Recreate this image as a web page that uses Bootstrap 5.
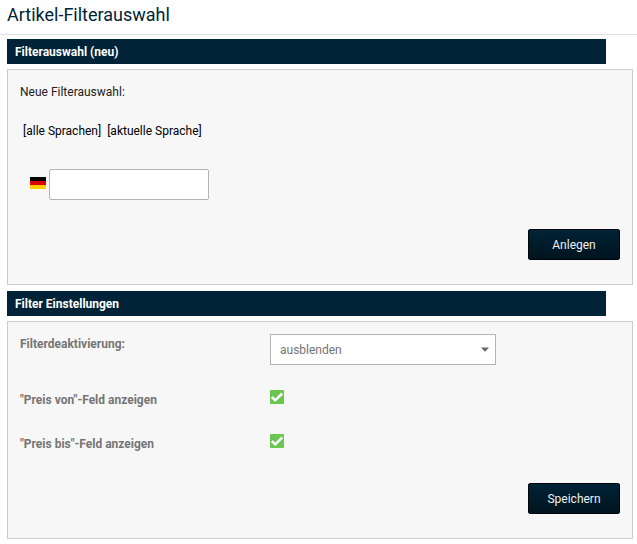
<!DOCTYPE html>
<html lang="de">
<head>
<meta charset="utf-8">
<title>Artikel-Filterauswahl</title>
<link href="https://cdn.jsdelivr.net/npm/bootstrap@5.3.0/dist/css/bootstrap.min.css" rel="stylesheet">
<style>
body { font-family: Roboto, sans-serif; font-size: 12px; line-height: 18px; color: #222; background: #fff; overflow: hidden; }
.page-head { height: 35px; padding: 5px 7px 0; border-bottom: 1px solid #e2e2e2; }
.page-head h1 { font-size: 18px; line-height: 20px; font-weight: 400; color: #002337; }
.bar { width: 599px; height: 25px; line-height: 24px; padding: 1px 0 0 8px; background: #002337; color: #fff; font-size: 12px; font-weight: 700; }
.content { padding: 4px 4px 0 7px; }
.panel { width: 626px; padding: 13px 12px 12px; margin-top: 5px; background: #f7f7f7; border: 1px solid #ccc; }
.panel-new { height: 216px; margin-bottom: 6px; }
.panel-set { height: 218px; }
.langs { margin-top: 21px; padding-left: 3px; gap: 6px; }
.langs a { color: #000; }
.name-row { margin: 29px 0 29px 10px; gap: 3px; }
.name-row .form-control { width: 160px; height: 31px; border: 1px solid #b3b3b3; border-radius: 2px; }
.flag { display: block; margin-bottom: 3px; }
.btn-dark-blue { width: 92px; height: 31px; padding: 1px 0 0; font-size: 12px; line-height: 28px; border: 1px solid #00060a; border-radius: 2px; color: #f0f0f0; background: linear-gradient(#002337, #00141f); }
.btn-dark-blue:hover { color: #fff; background: #002337; }
.setting-label { width: 250px; font-weight: 700; color: #757575; }
.select-box { width: 226px; height: 31px; margin-top: -1px; padding: 0 6px 0 9px; background: #fff; border: 1px solid #b3b3b3; border-radius: 0; font-size: 12px; color: #757575; }
.row-check { height: 18px; margin-top: 26px; }
.row-check svg { margin-top: -6px; }
.save-row { margin-top: 30px; }
</style>
<script src="https://cdn.jsdelivr.net/npm/bootstrap@5.3.0/dist/js/bootstrap.bundle.min.js"></script>
</head>
<body>
<header class="page-head"><h1 class="m-0">Artikel-Filterauswahl</h1></header>
<main class="content">
  <h2 class="bar m-0">Filterauswahl (neu)</h2>
  <section class="panel panel-new">
    <label for="name-de" class="d-block">Neue Filterauswahl:</label>
    <div class="langs d-flex">
      <a href="#" class="text-decoration-none">[alle Sprachen]</a>
      <a href="#" class="text-decoration-none">[aktuelle Sprache]</a>
    </div>
    <div class="name-row d-flex align-items-center">
      <svg class="flag" width="16" height="12" shape-rendering="crispEdges"><rect width="16" height="4" fill="#000"/><rect y="4" width="16" height="4" fill="#d00"/><rect y="8" width="16" height="4" fill="#ffce00"/></svg>
      <input id="name-de" type="text" class="form-control">
    </div>
    <div class="d-flex justify-content-end"><button type="button" class="btn btn-dark-blue">Anlegen</button></div>
  </section>
  <h2 class="bar m-0">Filter Einstellungen</h2>
  <section class="panel panel-set">
    <div class="d-flex">
      <div class="setting-label">Filterdeaktivierung:</div>
      <button type="button" class="select-box d-flex align-items-center justify-content-between">
        <span>ausblenden</span>
        <svg width="8" height="5" viewBox="0 0 8 5"><path d="M0 .5h8L4 4.8z" fill="#666"/></svg>
      </button>
    </div>
    <div class="row-check d-flex align-items-center">
      <div class="setting-label">"Preis von"-Feld anzeigen</div>
      <svg width="14" height="14" viewBox="0 0 14 14"><rect width="14" height="14" rx="1" fill="#6cc551"/><path d="M1.8 7 5.2 10.3 12.2 3.5" fill="none" stroke="#fff" stroke-width="2.5"/></svg>
    </div>
    <div class="row-check d-flex align-items-center">
      <div class="setting-label">"Preis bis"-Feld anzeigen</div>
      <svg width="14" height="14" viewBox="0 0 14 14"><rect width="14" height="14" rx="1" fill="#6cc551"/><path d="M1.8 7 5.2 10.3 12.2 3.5" fill="none" stroke="#fff" stroke-width="2.5"/></svg>
    </div>
    <div class="save-row d-flex justify-content-end"><button type="button" class="btn btn-dark-blue">Speichern</button></div>
  </section>
</main>
</body>
</html>
